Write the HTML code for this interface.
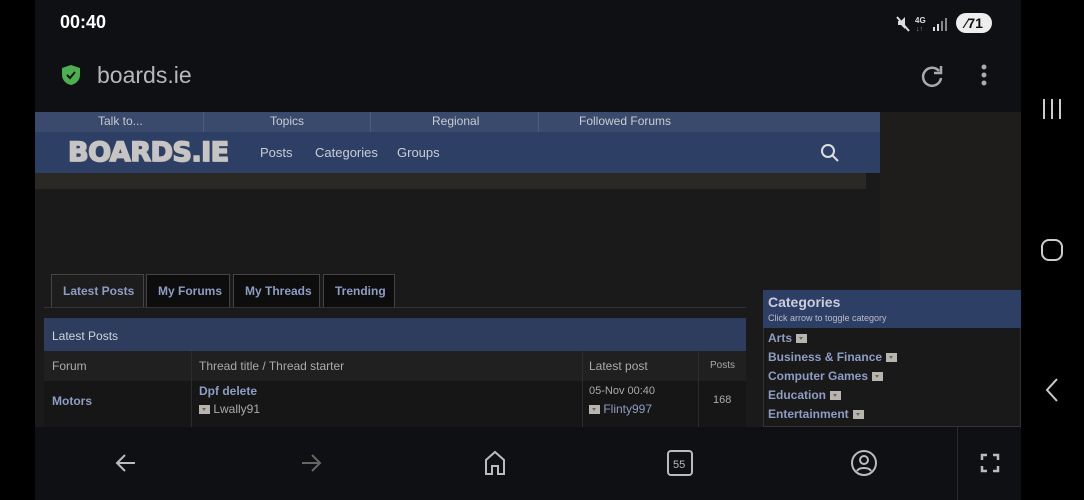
<!DOCTYPE html>
<html><head><meta charset="utf-8"><style>
*{margin:0;padding:0;box-sizing:border-box}
body{width:1084px;height:500px;overflow:hidden;background:#000;font-family:"Liberation Sans",sans-serif;position:relative}
.abs{position:absolute}
.phone{left:35px;top:0;width:986px;height:500px;background:#0f1014}
.txt{color:#c9ccd3;font-size:12px;white-space:nowrap}
.blue{color:#8e9dc4;font-weight:bold;font-size:12px;white-space:nowrap}
.chev{display:inline-block;width:11px;height:9px;background:#b8b5ae;vertical-align:middle;margin-left:4px;position:relative}
.chev:after{content:"";position:absolute;left:3px;top:3px;border:2.5px solid transparent;border-top:3px solid #666}
</style></head><body>
<div class="abs phone"></div>
<div class="abs" style="left:60px;top:12px;color:#fff;font-size:18px;font-weight:bold">00:40</div>
<svg class="abs" style="left:895px;top:14px" width="100" height="20">
<path d="M3 7h3l4-4v12l-4-4H3z" fill="#ddd"/><line x1="2" y1="3" x2="14" y2="17" stroke="#ddd" stroke-width="2"/>
<text x="20" y="9" fill="#ddd" font-size="8" font-weight="bold" font-family="Liberation Sans">4G</text>
<text x="21" y="17" fill="#999" font-size="7" font-family="Liberation Sans">↓↑</text>
<rect x="38" y="13" width="2" height="4" fill="#ddd"/><rect x="42" y="10" width="2" height="7" fill="#ddd"/><rect x="46" y="7" width="2" height="10" fill="#888"/><rect x="50" y="4" width="2" height="13" fill="#888"/>
</svg>
<div class="abs" style="left:956px;top:13px;width:36px;height:20px;border-radius:10px;background:#eee;color:#111;font-size:14px;font-weight:bold;text-align:center;line-height:20px">⁄71</div>
<svg class="abs" style="left:61px;top:64px" width="20" height="22"><path d="M10 1L19 4v7c0 5-4 9-9 10C5 20 1 16 1 11V4z" fill="#4caf50"/><path d="M6 11l3 3 5-6" stroke="#111" stroke-width="2" fill="none"/></svg>
<div class="abs" style="left:97px;top:62px;color:#b8b8bc;font-size:23px">boards.ie</div>
<svg class="abs" style="left:918px;top:62px" width="28" height="28"><path d="M21 9A9 9 0 1 0 23 16" stroke="#aaa" stroke-width="2.5" fill="none"/><path d="M23 4v7h-7" fill="none" stroke="#aaa" stroke-width="2.5"/></svg>
<svg class="abs" style="left:979px;top:64px" width="10" height="24"><circle cx="5" cy="3" r="2.5" fill="#aaa"/><circle cx="5" cy="11" r="2.5" fill="#aaa"/><circle cx="5" cy="19" r="2.5" fill="#aaa"/></svg>
<div class="abs" style="left:35px;top:112px;width:986px;height:315px;background:#1b1a1a"></div>
<div class="abs" style="left:880px;top:112px;width:141px;height:178px;background:#1f1d1c"></div>
<div class="abs" style="left:35px;top:112px;width:845px;height:20px;background:#3a4a6c"></div>
<div class="abs txt" style="left:98px;top:114px;color:#c5c8d0">Talk to...</div>
<div class="abs txt" style="left:270px;top:114px">Topics</div>
<div class="abs txt" style="left:432px;top:114px">Regional</div>
<div class="abs txt" style="left:579px;top:114px">Followed Forums</div>
<div class="abs" style="left:203px;top:112px;width:1px;height:20px;background:#4c5c7e"></div>
<div class="abs" style="left:370px;top:112px;width:1px;height:20px;background:#4c5c7e"></div>
<div class="abs" style="left:538px;top:112px;width:1px;height:20px;background:#4c5c7e"></div>
<div class="abs" style="left:35px;top:132px;width:845px;height:41px;background:#2e3f66"></div>
<div class="abs" style="left:68px;top:137px;color:#c6c5c3;font-size:27px;font-weight:bold;font-family:'DejaVu Sans',sans-serif;letter-spacing:-0.5px;-webkit-text-stroke:1.5px #c6c5c3;text-shadow:1px 1px 0 #8a8987">BOARDS.IE</div>
<div class="abs txt" style="left:260px;top:145px;font-size:13px">Posts</div>
<div class="abs txt" style="left:315px;top:145px;font-size:13px">Categories</div>
<div class="abs txt" style="left:397px;top:145px;font-size:13px">Groups</div>
<svg class="abs" style="left:820px;top:143px" width="20" height="20"><circle cx="8" cy="8" r="6" stroke="#ddd" stroke-width="2" fill="none"/><line x1="12.5" y1="12.5" x2="18" y2="18" stroke="#ddd" stroke-width="2"/></svg>
<div class="abs" style="left:35px;top:173px;width:831px;height:16px;background:#2a2926"></div>
<div class="abs" style="left:51px;top:274px;width:93px;height:33px;background:#1e1d1d;border:1px solid #444;border-bottom:none"></div>
<div class="abs blue" style="left:63px;top:284px">Latest Posts</div>
<div class="abs" style="left:146px;top:274px;width:84px;height:33px;background:#0d0d0d;border:1px solid #444;border-bottom:none"></div>
<div class="abs blue" style="left:158px;top:284px">My Forums</div>
<div class="abs" style="left:233px;top:274px;width:87px;height:33px;background:#0d0d0d;border:1px solid #444;border-bottom:none"></div>
<div class="abs blue" style="left:245px;top:284px">My Threads</div>
<div class="abs" style="left:323px;top:274px;width:72px;height:33px;background:#0d0d0d;border:1px solid #444;border-bottom:none"></div>
<div class="abs blue" style="left:335px;top:284px">Trending</div>
<div class="abs" style="left:44px;top:307px;width:702px;height:1px;background:#333"></div>
<div class="abs" style="left:44px;top:318px;width:702px;height:33px;background:#2e3d5e"></div>
<div class="abs txt" style="left:52px;top:329px;color:#d0d3da">Latest Posts</div>
<div class="abs" style="left:44px;top:351px;width:702px;height:30px;background:#202020"></div>
<div class="abs" style="left:44px;top:381px;width:702px;height:46px;background:#161616"></div>
<div class="abs" style="left:191px;top:351px;width:1px;height:76px;background:#2c2c2c"></div>
<div class="abs" style="left:582px;top:351px;width:1px;height:76px;background:#2c2c2c"></div>
<div class="abs" style="left:698px;top:351px;width:1px;height:76px;background:#2c2c2c"></div>
<div class="abs txt" style="left:52px;top:359px;color:#aaa">Forum</div>
<div class="abs txt" style="left:199px;top:359px;color:#aaa">Thread title / Thread starter</div>
<div class="abs txt" style="left:589px;top:359px;color:#aaa">Latest post</div>
<div class="abs txt" style="left:710px;top:360px;color:#aaa;font-size:10px">Posts</div>
<div class="abs blue" style="left:52px;top:394px">Motors</div>
<div class="abs blue" style="left:199px;top:384px">Dpf delete</div>
<div class="abs txt" style="left:195px;top:402px;color:#aaa"><span class="chev"></span> Lwally91</div>
<div class="abs txt" style="left:589px;top:385px;color:#aaa;font-size:11px">05-Nov 00:40</div>
<div class="abs txt" style="left:585px;top:402px;color:#8e9dc4"><span class="chev"></span> Flinty997</div>
<div class="abs txt" style="left:713px;top:394px;color:#aaa;font-size:11px">168</div>
<div class="abs" style="left:763px;top:290px;width:258px;height:137px;background:#191919;border:1px solid #333"></div>
<div class="abs" style="left:763px;top:290px;width:258px;height:38px;background:#2e3f66"></div>
<div class="abs" style="left:768px;top:294px;color:#ccd;font-size:14px;font-weight:bold">Categories</div>
<div class="abs" style="left:768px;top:313px;color:#bbc;font-size:9px">Click arrow to toggle category</div>
<div class="abs blue" style="left:768px;top:331px">Arts<span class="chev"></span></div>
<div class="abs blue" style="left:768px;top:350px">Business &amp; Finance<span class="chev"></span></div>
<div class="abs blue" style="left:768px;top:369px">Computer Games<span class="chev"></span></div>
<div class="abs blue" style="left:768px;top:388px">Education<span class="chev"></span></div>
<div class="abs blue" style="left:768px;top:407px">Entertainment<span class="chev"></span></div>
<div class="abs" style="left:35px;top:427px;width:986px;height:73px;background:#0f1014"></div>
<div class="abs" style="left:957px;top:427px;width:1px;height:73px;background:#2a2a2e"></div>
<svg class="abs" style="left:114px;top:451px" width="24" height="24"><path d="M21 12H4M11 4l-8 8 8 8" stroke="#bbb" stroke-width="2" fill="none"/></svg>
<svg class="abs" style="left:299px;top:451px" width="24" height="24"><path d="M3 12h17M13 4l8 8-8 8" stroke="#666" stroke-width="2" fill="none"/></svg>
<svg class="abs" style="left:483px;top:450px" width="24" height="26"><path d="M3 24V10l9-8 9 8v14h-6v-8h-6v8z" stroke="#bbb" stroke-width="2" fill="none"/></svg>
<svg class="abs" style="left:666px;top:449px" width="28" height="28"><rect x="2" y="2" width="24" height="24" rx="3" stroke="#bbb" stroke-width="2" fill="none"/><text x="7" y="19" fill="#bbb" font-size="11" font-family="Liberation Sans">55</text></svg>
<svg class="abs" style="left:850px;top:449px" width="28" height="28"><circle cx="14" cy="14" r="12" stroke="#bbb" stroke-width="2" fill="none"/><circle cx="14" cy="11" r="4" stroke="#bbb" stroke-width="2" fill="none"/><path d="M7 22c2-4 12-4 14 0" stroke="#bbb" stroke-width="2" fill="none"/></svg>
<svg class="abs" style="left:980px;top:453px" width="20" height="20"><path d="M2 7V2h5M13 2h5v5M18 13v5h-5M7 18H2v-5" stroke="#bbb" stroke-width="2.5" fill="none"/></svg>
<svg class="abs" style="left:1040px;top:98px" width="24" height="22"><path d="M4 1v20M12 1v20M20 1v20" stroke="#ccc" stroke-width="2"/></svg>
<svg class="abs" style="left:1040px;top:238px" width="24" height="24"><rect x="2" y="2" width="20" height="20" rx="7" stroke="#ccc" stroke-width="2" fill="none"/></svg>
<svg class="abs" style="left:1042px;top:377px" width="20" height="26"><path d="M15 2L5 13l10 11" stroke="#ccc" stroke-width="2" fill="none"/></svg>
</body></html>
